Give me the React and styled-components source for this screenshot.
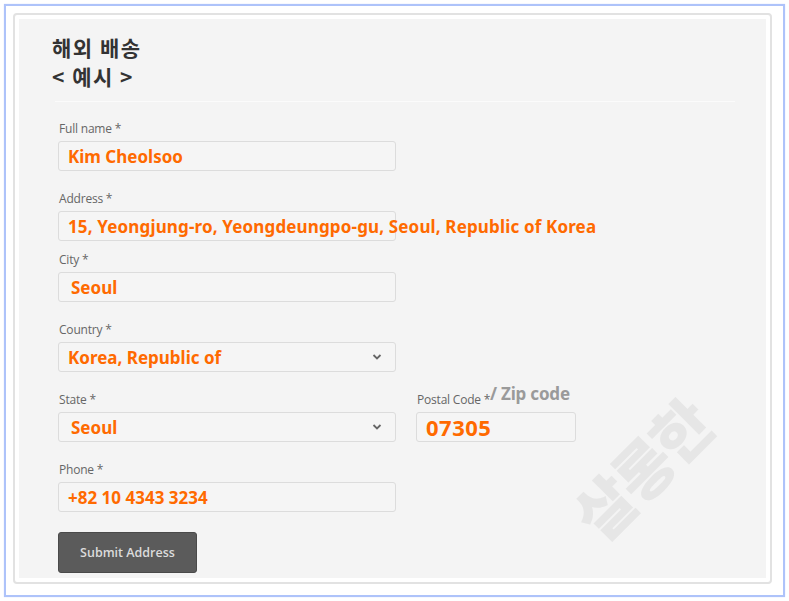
import React from 'react'
import styled, { createGlobalStyle } from 'styled-components'

const GlobalStyle = createGlobalStyle`
  html, body {
    margin: 0;
    padding: 0;
    background: #ffffff;
  }
`;

const Page = styled.div`
  width: 789px;
  height: 601px;
  padding: 4px;
  box-sizing: border-box;
`;

const Frame = styled.div`
  height: 100%;
  box-sizing: border-box;
  border: 2px solid #aec3fa;
  box-shadow: 0 0 1px #c9d7fd;
  padding: 7px 11px 11px 7px;
  background: #fff;
`;

const Card = styled.div`
  height: 100%;
  box-sizing: border-box;
  border: 2px solid #e2e2e2;
  border-radius: 4px;
  padding: 4px;
  background: #fff;
`;

const Panel = styled.div`
  position: relative;
  height: 100%;
  box-sizing: border-box;
  background: #f4f4f4;
  padding: 14px 0 0 33px;
  overflow: hidden;
`;

const Heading = styled.h2`
  margin: 0;
  font-family: "Noto Sans CJK KR", "Noto Sans", sans-serif;
  font-weight: 700;
  font-size: 21px;
  line-height: 29px;
  color: #333;
  letter-spacing: 1.5px;
`;

const Divider = styled.div`
  height: 1px;
  width: 680px;
  background: #fbfbfb;
  margin: 10px 0 0 3px;
`;

const Form = styled.form`
  display: flex;
  flex-direction: column;
  gap: 20px;
  padding: 19px 0 0 6px;
`;

const Row = styled.div`
  display: flex;
  gap: 20px;
`;

const Field = styled.div`
  display: flex;
  flex-direction: column;
  width: ${p => p.$w || 338}px;
  margin-top: ${p => p.$tight ? -9 : 0}px;
`;

const Label = styled.label`
  position: relative;
  font-family: "Open Sans", "Noto Sans", sans-serif;
  font-size: 12px;
  line-height: 16px;
  color: #666;
  padding-left: 1px;
  margin-bottom: 4px;
  letter-spacing: -0.2px;
`;

const Extra = styled.span`
  position: absolute;
  left: 74px;
  top: -6px;
  font-family: "Noto Sans", sans-serif;
  font-weight: 700;
  font-size: 17px;
  color: #9a9a9a;
  white-space: nowrap;
`;

const Box = styled.div`
  position: relative;
  height: 30px;
  box-sizing: border-box;
  border: 1px solid #dcdcdc;
  border-radius: 3px;
  background: #f5f5f5;
  display: flex;
  align-items: center;
  padding-left: ${p => p.$pad || 9}px;
`;

const Value = styled.span`
  font-family: "Noto Sans", sans-serif;
  font-weight: 700;
  font-size: ${p => p.$size || 17}px;
  color: #ff6a00;
  white-space: nowrap;
  letter-spacing: ${p => p.$ls || 0}px;
`;

const Chevron = styled.svg`
  position: absolute;
  right: 13px;
  top: 10px;
`;

const Button = styled.button`
  width: 139px;
  height: 41px;
  border: 1px solid #4a4a4a;
  border-radius: 3px;
  background: #5b5b5b;
  color: #dcdcdc;
  font-family: "Open Sans", "Noto Sans", sans-serif;
  font-weight: 600;
  font-size: 12.5px;
  cursor: pointer;
`;

const Watermark = styled.div`
  position: absolute;
  left: 540px;
  top: 404px;
  transform: rotate(-45deg);
  font-family: "Noto Sans CJK KR", sans-serif;
  font-weight: 900;
  font-size: 62px;
  color: #e6e6e6;
  letter-spacing: -3px;
  pointer-events: none;
`;

const Down = () => (
  <Chevron width="10" height="8" viewBox="0 0 10 8">
    <path d="M1.5 2 L5 5.5 L8.5 2" fill="none" stroke="#666" strokeWidth="1.8" />
  </Chevron>
);

const fields = [
  { label: 'Full name *', value: 'Kim Cheolsoo' },
  { label: 'Address *', value: '15, Yeongjung-ro, Yeongdeungpo-gu, Seoul, Republic of Korea', ls: 0.15 },
  { label: 'City *', value: 'Seoul', pad: 12, tight: true },
  { label: 'Country *', value: 'Korea, Republic of', select: true },
];

export default function App() {
  return (
    <Page>
      <GlobalStyle />
      <Frame>
        <Card>
          <Panel>
            <Heading>해외 배송<br />&lt; 예시 &gt;</Heading>
            <Divider />
            <Form onSubmit={e => e.preventDefault()}>
              {fields.map((f, i) => (
                <Field key={i} $tight={f.tight}>
                  <Label>{f.label}</Label>
                  <Box $pad={f.pad}>
                    <Value $ls={f.ls}>{f.value}</Value>
                    {f.select && <Down />}
                  </Box>
                </Field>
              ))}
              <Row>
                <Field>
                  <Label>State *</Label>
                  <Box $pad={12}>
                    <Value>Seoul</Value>
                    <Down />
                  </Box>
                </Field>
                <Field $w={160}>
                  <Label>Postal Code *<Extra>/ Zip code</Extra></Label>
                  <Box>
                    <Value $size={22} $ls={0.5}>07305</Value>
                  </Box>
                </Field>
              </Row>
              <Field>
                <Label>Phone *</Label>
                <Box>
                  <Value>+82 10 4343 3234</Value>
                </Box>
              </Field>
              <div>
                <Button type="submit">Submit Address</Button>
              </div>
            </Form>
            <Watermark>살롱한</Watermark>
          </Panel>
        </Card>
      </Frame>
    </Page>
  )
}
